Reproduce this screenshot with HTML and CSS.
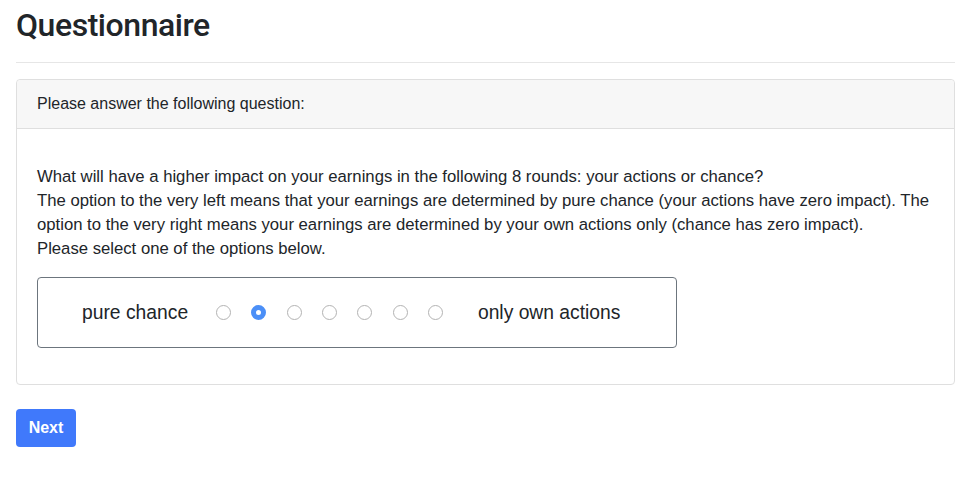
FILE: index.html
```html
<!DOCTYPE html>
<html>
<head>
<meta charset="utf-8">
<link rel="stylesheet" href="styles.css">
</head>
<body>
<div class="container">
  <h2 class="title">Questionnaire</h2>
  <hr class="rule">
  <div class="card">
    <div class="card-header">Please answer the following question:</div>
    <div class="card-body">
      <p class="question">What will have a higher impact on your earnings in the following 8 rounds: your actions or chance?<br>The option to the very left means that your earnings are determined by pure chance (your actions have zero impact). The option to the very right means your earnings are determined by your own actions only (chance has zero impact).<br>Please select one of the options below.</p>
      <div class="scale">
        <span class="label-left">pure chance</span>
        <div class="radios">
          <input type="radio" name="q" class="radio">
          <input type="radio" name="q" class="radio" checked>
          <input type="radio" name="q" class="radio">
          <input type="radio" name="q" class="radio">
          <input type="radio" name="q" class="radio">
          <input type="radio" name="q" class="radio">
          <input type="radio" name="q" class="radio">
        </div>
        <span class="label-right">only own actions</span>
      </div>
    </div>
  </div>
  <button class="btn">Next</button>
</div>
</body>
</html>
```
FILE: styles.css
```css
html, body {
  margin: 0;
  padding: 0;
  background: #fff;
}
body {
  font-family: "Liberation Sans", Arial, sans-serif;
  font-size: 16px;
  line-height: 24px;
  color: #212529;
}
.container {
  width: 939px;
  margin-left: 16px;
}
.title {
  font-family: Roboto, "Liberation Sans", sans-serif;
  font-size: 32px;
  font-weight: 500;
  letter-spacing: -0.45px;
  line-height: 38px;
  margin: 6px 0 0 0;
}
.rule {
  border: 0;
  border-top: 1px solid #e6e6e6;
  margin: 18px 0 16px 0;
}
.card {
  border: 1px solid #dfdfdf;
  border-radius: 4px;
}
.card-header {
  background: #f7f7f7;
  border-bottom: 1px solid #dfdfdf;
  padding: 12px 20px;
  border-radius: 4px 4px 0 0;
}
.card-body {
  padding: 20px;
}
.question {
  font-size: 16.7px;
  margin: 16px 0 16px 0;
}
.scale {
  width: 638px;
  height: 69px;
  border: 1px solid #6c757d;
  border-radius: 4px;
  display: flex;
  align-items: center;
  font-size: 19.3px;
  margin-bottom: 16px;
}
.label-left {
  margin-left: 44px;
}
.radios {
  display: flex;
  gap: 20.3px;
  margin-left: 28px;
}
.label-right {
  margin-left: 35px;
}
.radio {
  appearance: none;
  -webkit-appearance: none;
  width: 15px;
  height: 15px;
  margin: 0;
  border: 1px solid #b3b3b3;
  border-radius: 50%;
  background: #fff;
  box-sizing: border-box;
}
.radio:checked {
  border: 5px solid #4b8ff7;
  background: #fff;
}
.btn {
  margin-top: 24px;
  width: 60px;
  height: 38px;
  background: #4079fb;
  color: #fff;
  border: 0;
  border-radius: 4px;
  font-family: "Liberation Sans", Arial, sans-serif;
  font-size: 16px;
  font-weight: bold;
  padding: 0;
}
```
